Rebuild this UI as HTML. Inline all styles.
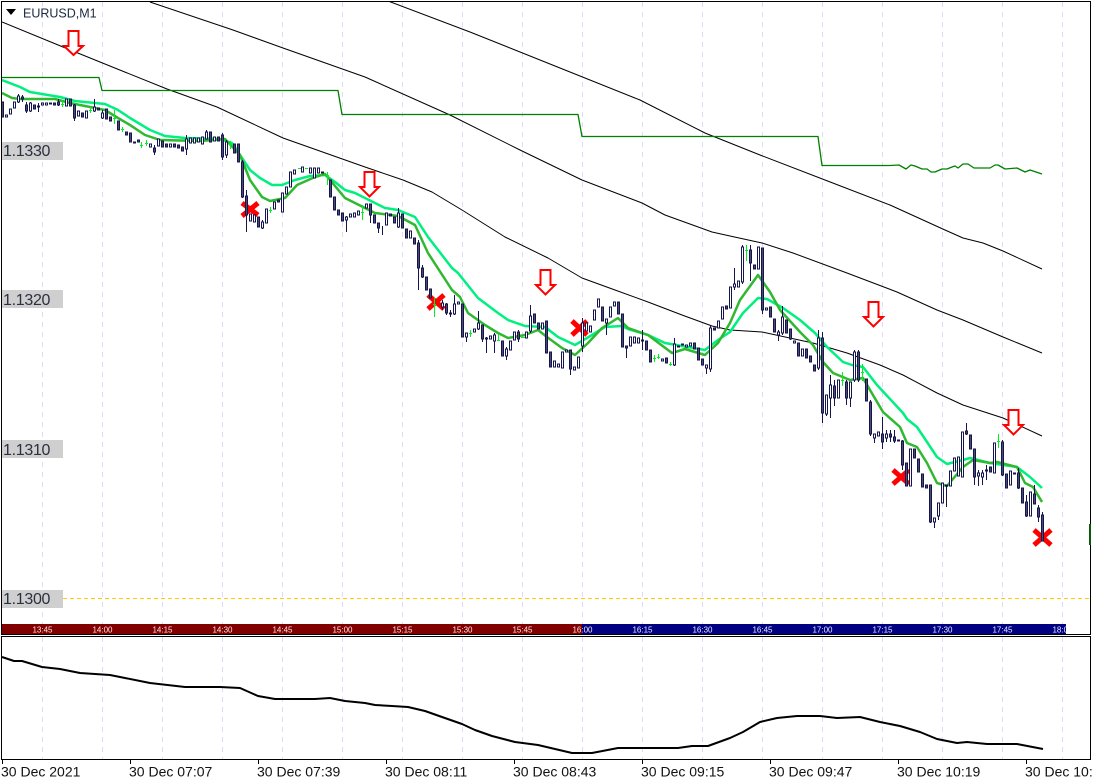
<!DOCTYPE html>
<html>
<head>
<meta charset="utf-8">
<title>EURUSD,M1</title>
<style>
html,body{margin:0;padding:0;background:#fff;width:1094px;height:784px;overflow:hidden}
svg{display:block;position:absolute;left:0;top:0}
text{font-family:"Liberation Sans",sans-serif}
</style>
</head>
<body>
<svg width="1094" height="784" viewBox="0 0 1094 784" xmlns="http://www.w3.org/2000/svg">
<defs>
<clipPath id="stripclip"><rect x="2" y="624" width="1064" height="10"/></clipPath>
<clipPath id="mainclip"><rect x="2" y="2" width="1088" height="622"/></clipPath>
</defs>
<rect width="1094" height="784" fill="#fff"/>

<!-- grid -->
<path d="M42.5 2V624M102.5 2V624M162.5 2V624M222.5 2V624M282.5 2V624M342.5 2V624M402.5 2V624M462.5 2V624M522.5 2V624M582.5 2V624M642.5 2V624M702.5 2V624M762.5 2V624M822.5 2V624M882.5 2V624M942.5 2V624M1002.5 2V624M1062.5 2V624M42.5 637V759M102.5 637V759M162.5 637V759M222.5 637V759M282.5 637V759M342.5 637V759M402.5 637V759M462.5 637V759M522.5 637V759M582.5 637V759M642.5 637V759M702.5 637V759M762.5 637V759M822.5 637V759M882.5 637V759M942.5 637V759M1002.5 637V759M1062.5 637V759" stroke="#dcdcf8" stroke-width="1" stroke-dasharray="5 5" fill="none"/>

<!-- price labels -->
<rect x="2" y="142" width="61" height="18" fill="#cfcfcf"/>
<rect x="2" y="290" width="61" height="18" fill="#cfcfcf"/>
<rect x="2" y="440" width="61" height="18" fill="#cfcfcf"/>
<rect x="2" y="590" width="61" height="18" fill="#cfcfcf"/>
<g font-size="16" fill="#2a3040" letter-spacing="-.3">
<text x="3" y="156">1.1330</text>
<text x="3" y="305">1.1320</text>
<text x="3" y="455">1.1310</text>
<text x="3" y="604">1.1300</text>
</g>
<path d="M63 598.5H1090" stroke="#ffcc00" stroke-width="1" stroke-dasharray="4 3" fill="none"/>

<g clip-path="url(#mainclip)" fill="none" stroke-linejoin="round">
<!-- black MAs -->
<path d="M2 22L63 47L100 62L167 89L217 107L283 138L365 167L403 180L432 192L462 210L505 237L548 258L582 278L615 290L648 302L682 315L712 326L730 330L762 332L813 343L847 353L880 365L903 375L937 393L963 405L1003 418L1042 436" stroke="#000" stroke-width="1"/>
<path d="M150 2L233 30L283 48L365 77L450 115L520 150L582 180L642 203L665 215L712 232L730 236L762 243L793 253L847 273L897 292L937 310L963 320L1003 337L1042 353" stroke="#000" stroke-width="1"/>
<path d="M388 1L470 32L560 68L640 100L705 133L760 155L825 180L890 205L945 230L963 238L983 243L1003 251L1042 269" stroke="#000" stroke-width="1"/>
<!-- step line -->
<path d="M2 77.5H99L102 90.5H338L342 114.5H578L582 136.5H818L822 165.5H890L899 165L906 169L911 165L915 166L922 169L927 169L931 172L935 172L942 169L947 169L952 167L955 166L958 168L963 164L968 164L974 168L983 168L990 168L995 165L998 165L1005 169L1017 168L1025 172L1030 170L1042 174" stroke="#008000" stroke-width="1.3"/>

<!-- red crosses below candles -->
<path d="M242 203L258 215M242 216L258 203M428 295L444 309M428 309L444 295M572 321L587 335M572 335L587 321M893 470L909 484M893 484L909 470M1034 530L1051 545M1034 545L1051 530" stroke="#ff0000" stroke-width="5"/>

<!-- bright green MA -->
<path d="M2 80L20 87L30 92L60 97L75 101L105 104L118 110L130 118L150 130L165 136L185 138L220 139L232 143L240 155L250 170L260 178L272 185L282 185L295 180L310 176L325 175L335 182L345 190L355 193L365 198L385 208L398 210L415 217L428 237L452 268L458 273L478 298L498 313L508 320L525 326L545 327L558 337L575 345L592 335L605 327L622 326L628 329L648 335L665 343L682 346L705 350L718 340L730 332L743 313L758 298L767 299L783 308L800 320L815 333L827 347L843 362L852 365L863 367L877 385L903 413L907 419L917 427L937 457L947 464L963 460L970 458L990 463L1017 467L1030 477L1042 488" stroke="#00f080" stroke-width="2.5"/>
<!-- dark green MA -->
<path d="M2 93L12 98L20 99L55 99L70 103L105 110L118 118L130 125L145 135L160 140L200 141L225 139L240 155L250 180L262 197L270 201L285 198L297 185L315 177L325 174L330 180L345 198L365 208L375 213L398 216L415 225L428 253L452 290L460 297L468 313L485 325L498 333L508 338L525 335L538 330L547 337L562 348L575 355L588 343L602 328L618 318L628 328L648 335L672 353L685 349L705 355L718 343L730 323L740 300L753 282L758 275L770 292L780 310L800 332L813 345L823 362L833 373L850 380L863 378L870 390L883 412L900 427L907 443L917 447L927 463L937 483L947 486L963 467L973 460L990 463L997 462L1017 467L1025 483L1033 487L1042 502" stroke="#30b830" stroke-width="2.5"/>

<g shape-rendering="crispEdges">
<!-- wicks -->
<path d="M18.5 94V103M22.5 95V102M26.5 102V113M30.5 102V112M38.5 103V112M58.5 99V106M74.5 104V121M94.5 99V112M102.5 110V119M154.5 145V155M186.5 135V155M206.5 130V139M222.5 133V160M226.5 140V158M242.5 160V198M246.5 190V232M262.5 220V229M346.5 216V232M370.5 204V223M378.5 223V233M382.5 226V235M398.5 208V228M418.5 240V290M422.5 265V278M442.5 300V310M446.5 303V315M450.5 310V317M454.5 295V315M466.5 333V342M478.5 311V330M482.5 325V342M486.5 337V353M494.5 333V353M506.5 347V360M530.5 305V333M518.5 330V342M570.5 350V375M582.5 318V352M606.5 319V335M626.5 346V358M642.5 330V350M674.5 338V366M710.5 326V372M706.5 365V374M734.5 268V290M742.5 245V284M750.5 245V281M762.5 248V314M778.5 330V341M782.5 306V335M790.5 329V340M818.5 330V370M822.5 332V423M826.5 395V416M830.5 375V418M834.5 380V406M846.5 380V405M850.5 382V407M854.5 350V382M858.5 350V382M870.5 400V436M874.5 434V443M882.5 417V449M886.5 430V442M890.5 430V442M894.5 430V443M902.5 440V470M930.5 485V523M934.5 518V528M938.5 503V520M946.5 485V507M966.5 423V435M974.5 449V485M978.5 470V486M982.5 470V485M986.5 465V480M1002.5 440V476M1018.5 468V489M1026.5 495V517M1034.5 485V504M1038.5 505V522M1042.5 512V541" stroke="#14144e" stroke-width="1"/>
<!-- bearish bodies -->
<path fill="#4c4c68" stroke="#14144e" stroke-width="1" d="M1.5 102h2v15h-2zM21.5 97h2v2h-2zM25.5 105h2v6h-2zM33.5 105h2v4h-2zM53.5 103h2v2h-2zM57.5 102h2v3h-2zM69.5 99h2v7h-2zM73.5 105h2v13h-2zM81.5 113h2v4h-2zM97.5 108h2v2h-2zM105.5 109h2v10h-2zM109.5 117h2v4h-2zM117.5 121h2v9h-2zM125.5 132h2v3h-2zM129.5 133h2v9h-2zM133.5 142h2v1h-2zM137.5 140h2v2h-2zM153.5 148h2v4h-2zM161.5 141h2v6h-2zM165.5 144h2v3h-2zM173.5 144h2v3h-2zM177.5 145h2v3h-2zM181.5 147h2v4h-2zM209.5 132h2v10h-2zM217.5 137h2v4h-2zM221.5 135h2v22h-2zM233.5 144h2v9h-2zM237.5 144h2v18h-2zM241.5 162h2v35h-2zM245.5 196h2v19h-2zM257.5 217h2v10h-2zM277.5 200h2v2h-2zM321.5 172h2v1h-2zM329.5 180h2v17h-2zM333.5 197h2v13h-2zM337.5 210h2v5h-2zM341.5 213h2v8h-2zM369.5 204h2v11h-2zM373.5 215h2v8h-2zM377.5 223h2v5h-2zM389.5 214h2v2h-2zM393.5 217h2v6h-2zM401.5 214h2v14h-2zM405.5 229h2v9h-2zM413.5 238h2v6h-2zM417.5 243h2v25h-2zM421.5 268h2v9h-2zM425.5 277h2v13h-2zM429.5 289h2v9h-2zM445.5 304h2v9h-2zM449.5 313h2v1h-2zM461.5 304h2v33h-2zM481.5 325h2v14h-2zM485.5 338h2v1h-2zM501.5 341h2v15h-2zM517.5 332h2v7h-2zM533.5 314h2v9h-2zM537.5 323h2v6h-2zM545.5 321h2v32h-2zM549.5 352h2v15h-2zM569.5 350h2v19h-2zM601.5 307h2v14h-2zM617.5 302h2v12h-2zM621.5 314h2v33h-2zM625.5 346h2v2h-2zM641.5 340h2v1h-2zM645.5 341h2v9h-2zM649.5 350h2v12h-2zM665.5 358h2v5h-2zM681.5 344h2v1h-2zM693.5 343h2v6h-2zM697.5 348h2v12h-2zM701.5 359h2v6h-2zM713.5 328h2v2h-2zM725.5 306h2v3h-2zM749.5 250h2v13h-2zM753.5 265h2v4h-2zM761.5 248h2v62h-2zM769.5 307h2v10h-2zM773.5 319h2v13h-2zM785.5 320h2v13h-2zM789.5 329h2v10h-2zM797.5 343h2v13h-2zM805.5 349h2v9h-2zM809.5 356h2v6h-2zM813.5 365h2v6h-2zM821.5 338h2v75h-2zM833.5 386h2v12h-2zM845.5 382h2v16h-2zM857.5 352h2v28h-2zM865.5 379h2v22h-2zM869.5 402h2v32h-2zM881.5 434h2v8h-2zM889.5 434h2v3h-2zM893.5 437h2v4h-2zM897.5 440h2v1h-2zM901.5 441h2v24h-2zM905.5 463h2v23h-2zM913.5 449h2v9h-2zM917.5 459h2v13h-2zM921.5 474h2v13h-2zM925.5 485h2v3h-2zM929.5 485h2v37h-2zM945.5 485h2v1h-2zM965.5 431h2v3h-2zM969.5 435h2v14h-2zM973.5 449h2v28h-2zM985.5 470h2v1h-2zM989.5 467h2v5h-2zM1001.5 442h2v33h-2zM1005.5 474h2v14h-2zM1013.5 473h2v1h-2zM1017.5 473h2v15h-2zM1021.5 488h2v15h-2zM1025.5 502h2v14h-2zM1033.5 494h2v10h-2zM1037.5 508h2v9h-2zM1041.5 515h2v26h-2z"/>
<!-- bullish bodies -->
<path fill="#fff" stroke="#14144e" stroke-width="1" d="M5.5 115h2v2h-2zM9.5 109h2v5h-2zM13.5 102h2v6h-2zM17.5 96h2v6h-2zM29.5 103h2v8h-2zM37.5 106h2v1h-2zM41.5 103h2v2h-2zM45.5 103h2v2h-2zM49.5 103h2v1h-2zM65.5 99h2v7h-2zM77.5 111h2v5h-2zM85.5 111h2v7h-2zM93.5 107h2v4h-2zM101.5 113h2v5h-2zM149.5 144h2v3h-2zM157.5 139h2v7h-2zM169.5 144h2v3h-2zM185.5 139h2v10h-2zM189.5 138h2v5h-2zM193.5 138h2v5h-2zM197.5 138h2v4h-2zM201.5 137h2v7h-2zM205.5 132h2v7h-2zM213.5 137h2v4h-2zM225.5 142h2v13h-2zM249.5 214h2v7h-2zM253.5 215h2v7h-2zM261.5 222h2v6h-2zM265.5 209h2v14h-2zM273.5 202h2v7h-2zM281.5 193h2v19h-2zM285.5 187h2v7h-2zM289.5 172h2v15h-2zM293.5 170h2v4h-2zM301.5 167h2v5h-2zM309.5 168h2v5h-2zM313.5 168h2v10h-2zM317.5 168h2v5h-2zM345.5 217h2v3h-2zM349.5 214h2v3h-2zM353.5 213h2v4h-2zM357.5 211h2v4h-2zM365.5 204h2v4h-2zM385.5 213h2v12h-2zM397.5 213h2v14h-2zM409.5 231h2v7h-2zM441.5 303h2v4h-2zM453.5 304h2v10h-2zM457.5 302h2v2h-2zM465.5 333h2v4h-2zM473.5 329h2v3h-2zM477.5 323h2v6h-2zM489.5 336h2v3h-2zM493.5 335h2v6h-2zM505.5 349h2v7h-2zM509.5 341h2v9h-2zM513.5 332h2v8h-2zM525.5 332h2v6h-2zM529.5 316h2v15h-2zM541.5 323h2v6h-2zM553.5 361h2v6h-2zM557.5 364h2v3h-2zM561.5 352h2v16h-2zM565.5 350h2v2h-2zM573.5 367h2v3h-2zM577.5 357h2v11h-2zM581.5 323h2v23h-2zM585.5 323h2v8h-2zM589.5 326h2v6h-2zM593.5 310h2v10h-2zM597.5 299h2v8h-2zM605.5 319h2v4h-2zM609.5 307h2v10h-2zM613.5 302h2v4h-2zM629.5 337h2v9h-2zM633.5 337h2v6h-2zM637.5 338h2v5h-2zM661.5 359h2v2h-2zM673.5 344h2v21h-2zM677.5 346h2v1h-2zM685.5 345h2v2h-2zM689.5 343h2v3h-2zM705.5 365h2v3h-2zM709.5 328h2v41h-2zM717.5 321h2v7h-2zM721.5 307h2v12h-2zM729.5 287h2v21h-2zM733.5 284h2v3h-2zM737.5 281h2v6h-2zM741.5 247h2v35h-2zM757.5 247h2v22h-2zM765.5 308h2v2h-2zM777.5 332h2v3h-2zM781.5 317h2v16h-2zM793.5 341h2v2h-2zM801.5 349h2v7h-2zM817.5 338h2v30h-2zM825.5 395h2v19h-2zM829.5 385h2v13h-2zM837.5 380h2v18h-2zM849.5 382h2v16h-2zM853.5 352h2v28h-2zM873.5 434h2v4h-2zM877.5 432h2v4h-2zM885.5 434h2v4h-2zM909.5 449h2v37h-2zM933.5 518h2v4h-2zM937.5 503h2v13h-2zM941.5 483h2v20h-2zM949.5 471h2v15h-2zM953.5 458h2v13h-2zM957.5 457h2v19h-2zM961.5 432h2v45h-2zM977.5 473h2v3h-2zM981.5 473h2v4h-2zM993.5 443h2v30h-2zM1009.5 471h2v14h-2zM1029.5 492h2v24h-2z"/>
<!-- green doji -->
<path stroke="#00ee22" stroke-width="1" d="M62.5 101V107M61 104.5H64M90.5 107V113M89 110.5H92M114.5 110V124M113 118.5H116M122.5 127V132M121 129.5H124M141.5 142V148M140 145.5H143M146.5 140V146M145 143.5H148M230.5 141V149M229 144.5H232M270.5 207V213M269 210.5H272M298 168.5H301M305 168.5H308M327.5 172V185M326 175.5H329M362.5 205V220M361 212.5H364M434.5 298V317M433 304.5H436M470.5 330V337M469 333.5H472M498.5 334V341M497 340.5H500M521 337.5H525M654.5 355V362M653 358.5H656M658.5 354V359M657 357.5H660M670.5 362V366M669 364.5H672M746.5 245V261M745 250.5H748M842.5 372V386M841 380.5H844M862.5 364V381M861 372.5H864M998.5 434V448M997 441.5H1000"/>
</g>

<!-- red arrows -->
<g fill="#fff" stroke="#ff0000" stroke-width="2" stroke-linejoin="miter">
<path d="M68.5 31H78.5V46H83L73.5 55L64 46H68.5Z"/>
<path d="M364.5 172H374.5V187H379L369.5 196.500L360 187H364.500Z"/>
<path d="M540.5 270H550.5V285H555L545.5 294.500L536 285H540.500Z"/>
<path d="M868.5 302H878.5V317H883L873.5 326.500L864 317H868.500Z"/>
<path d="M1008.500 410H1018.500V425H1023L1013.500 434.500L1004 425H1008.500Z"/>
</g>
</g>

<!-- title -->
<path d="M6 9H16L11 15Z" fill="#000"/>
<text x="23" y="17.500" font-size="12.500" fill="#1c2a40">EURUSD,M1</text>

<!-- session strip -->
<rect x="2" y="624" width="580" height="10" fill="#800000"/>
<rect x="582" y="624" width="484" height="10" fill="#000080"/>
<g font-size="8" text-anchor="middle" clip-path="url(#stripclip)">
<g fill="#fbe6e6">
<text x="42.500" y="632.500">13:45</text><text x="102.500" y="632.500">14:00</text><text x="162.500" y="632.500">14:15</text><text x="222.500" y="632.500">14:30</text><text x="282.500" y="632.500">14:45</text><text x="342.500" y="632.500">15:00</text><text x="402.500" y="632.500">15:15</text><text x="462.500" y="632.500">15:30</text><text x="522.500" y="632.500">15:45</text><text x="582.500" y="632.500">16:00</text>
</g>
<g fill="#e8e8ff">
<text x="642.500" y="632.500">16:15</text><text x="702.500" y="632.500">16:30</text><text x="762.500" y="632.500">16:45</text><text x="822.500" y="632.500">17:00</text><text x="882.500" y="632.500">17:15</text><text x="942.500" y="632.500">17:30</text><text x="1002.500" y="632.500">17:45</text><text x="1062.500" y="632.500">18:00</text>
</g>
</g>

<!-- frames -->
<path d="M1.500 1.500H1090.500V634.500H1.500Z" fill="none" stroke="#000" stroke-width="1" shape-rendering="crispEdges"/>
<path d="M1.500 636.500H1090.500V759.500H1.500Z" fill="none" stroke="#000" stroke-width="1" shape-rendering="crispEdges"/>
<rect x="1089" y="524" width="2" height="21" fill="#0a5a0a"/>

<!-- sub window line -->
<path d="M2 657L8 659L14 661L22 661L42 667L60 669L80 673L110 675L125 678L150 683L185 687L220 687L240 688L258 696L275 699L315 699L330 698L345 701L365 703L375 705L392 706L408 707L425 711L442 717L462 724L475 730L492 736L515 742L538 745L555 749L572 753L592 753L618 748L678 748L692 746L708 746L730 738L743 732L760 722L777 718L797 716L820 716L837 718L860 717L880 722L900 726L920 732L937 739L957 743L967 742L987 744L1017 744L1043 749" fill="none" stroke="#000" stroke-width="2" stroke-linejoin="round"/>

<!-- time axis -->
<path d="M2.500 759V764M130.500 759V764M258.500 759V764M386.500 759V764M514.500 759V764M642.500 759V764M770.500 759V764M898.500 759V764M1026.500 759V764" stroke="#000" stroke-width="1" shape-rendering="crispEdges"/>
<g font-size="14" fill="#111">
<text x="1" y="776.500">30 Dec 2021</text>
<text x="129" y="776.500">30 Dec 07:07</text>
<text x="257" y="776.500">30 Dec 07:39</text>
<text x="385" y="776.500">30 Dec 08:11</text>
<text x="513" y="776.500">30 Dec 08:43</text>
<text x="641" y="776.500">30 Dec 09:15</text>
<text x="769" y="776.500">30 Dec 09:47</text>
<text x="897" y="776.500">30 Dec 10:19</text>
<text x="1025" y="776.500">30 Dec 10:</text>
</g>
</svg>
</body>
</html>
